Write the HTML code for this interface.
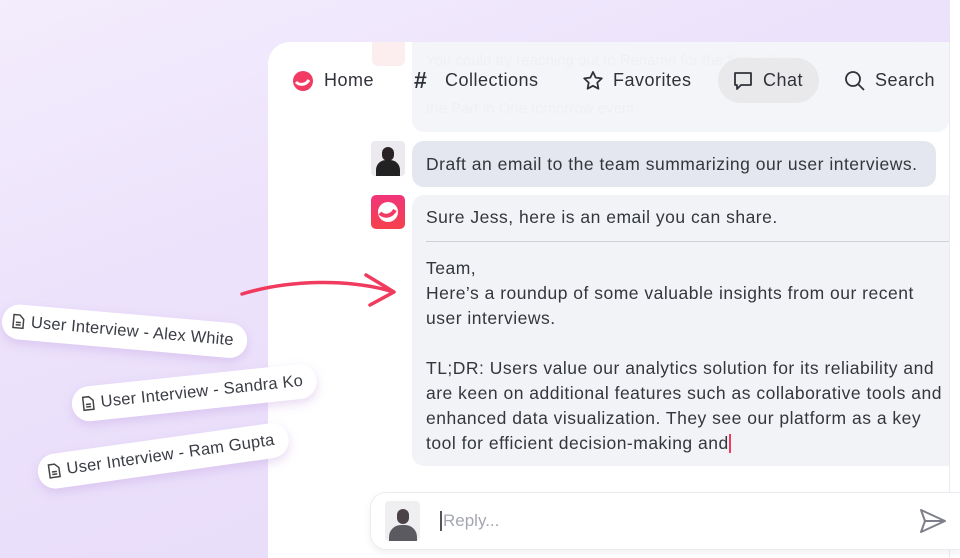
<!DOCTYPE html><html><head><style>
html,body{margin:0;width:960px;height:558px;overflow:hidden}
body{background:#fff;font-family:"Liberation Sans",sans-serif;position:relative}
.wrap{position:absolute;left:0;top:0;width:960px;height:558px;overflow:hidden}
.bg{position:absolute;left:0;top:-40px;width:950px;height:598px;border-radius:0 40px 0 0;background:linear-gradient(160deg,#f4eefc 0%,#ece2fb 40%,#e6dafa 100%)}
.card{position:absolute;left:268px;top:42px;width:681px;height:516px;background:#fff;border-radius:22px 0 0 0;border-right:1px solid #ebeaf3}
.t{position:absolute;color:#30323a;white-space:nowrap}
.nav{font-size:18px;top:70px;letter-spacing:.5px}
.b{position:absolute;border-radius:12px}
.msg{font-size:17.5px;letter-spacing:.5px;color:#33363d;line-height:25px}
.pill{position:absolute;background:#fff;border-radius:20px;box-shadow:0 4px 10px rgba(190,150,220,.35);font-size:16.5px;letter-spacing:.2px;color:#3b3d45;padding:8px 14px 8px 10px;white-space:nowrap;transform-origin:left center}
.pill svg{vertical-align:-3px;margin-right:6px}
</style></head><body><div class="wrap">
<div class="bg"></div>
<div class="card"></div>
<div class="b" style="left:412px;top:42px;width:537px;height:90px;background:#f4f5f8;border-radius:0 0 12px 12px"></div>
<div class="t" style="left:426px;top:52px;font-size:15px;color:#f0f0f3">You could try reaching out to Rename for the first sales</div>
<div class="t" style="left:426px;top:100px;font-size:15px;color:#f0f0f3">the Part in One tomorrow event</div>
<div style="position:absolute;left:372px;top:42px;width:33px;height:24px;background:#fcedef;border-radius:0 0 6px 6px"></div>
<svg style="position:absolute;left:292px;top:70px" width="22" height="22" viewBox="0 0 22 22"><circle cx="11" cy="11" r="10" fill="#f23a62"/><path d="M4 12c3 3 9 4 13-2" stroke="#fff" stroke-width="3" fill="none"/></svg>
<div class="t nav" style="left:324px">Home</div>
<div class="t nav" style="left:414px;font-size:23px;top:67px;font-weight:bold">#</div>
<div class="t nav" style="left:445px">Collections</div>
<svg style="position:absolute;left:581px;top:69px" width="24" height="24" viewBox="0 0 24 24"><path d="M12 3l2.7 5.6 6.1.8-4.5 4.2 1.1 6.1L12 16.8 6.6 19.7l1.1-6.1L3.2 9.4l6.1-.8z" fill="none" stroke="#30323a" stroke-width="1.8" stroke-linejoin="round"/></svg>
<div class="t nav" style="left:613px">Favorites</div>
<div style="position:absolute;left:718px;top:58px;width:101px;height:45px;border-radius:23px;background:#e9e9ec"></div>
<svg style="position:absolute;left:731px;top:69px" width="24" height="24" viewBox="0 0 24 24"><path d="M4 4h16v12H10l-4 4v-4H4z" fill="none" stroke="#30323a" stroke-width="1.8" stroke-linejoin="round"/></svg>
<div class="t nav" style="left:763px">Chat</div>
<svg style="position:absolute;left:843px;top:69px" width="24" height="24" viewBox="0 0 24 24"><circle cx="10" cy="10" r="7" fill="none" stroke="#30323a" stroke-width="1.8"/><path d="M15 15l6 6" stroke="#30323a" stroke-width="1.8"/></svg>
<div class="t nav" style="left:875px">Search</div>
<div style="position:absolute;left:371px;top:141px;width:34px;height:35px;background:#ece9ef;border-radius:4px;overflow:hidden"><div style="position:absolute;left:11px;top:6px;width:12px;height:14px;border-radius:6px;background:#2a2224"></div><div style="position:absolute;left:5px;top:19px;width:24px;height:20px;border-radius:10px 10px 0 0;background:#222"></div></div>
<div class="b" style="left:412px;top:141px;width:524px;height:46px;background:#e4e7ef"></div>
<div class="t msg" style="left:426px;top:152px">Draft an email to the team summarizing our user interviews.</div>
<svg style="position:absolute;left:371px;top:195px" width="34" height="34" viewBox="0 0 34 34"><defs><linearGradient id="g" x1="0" y1="0" x2="0" y2="1"><stop offset="0" stop-color="#f0357a"/><stop offset="1" stop-color="#f5414c"/></linearGradient></defs><rect width="34" height="34" rx="5" fill="url(#g)"/><circle cx="17" cy="17" r="10" fill="#fff"/><path d="M9 18c4 4 11 4 15-3" stroke="#f23a62" stroke-width="4" fill="none"/></svg>
<div class="b" style="left:412px;top:195px;width:537px;height:271px;background:#f2f3f6;border-radius:12px 0 0 12px"></div>
<div class="t msg" style="left:426px;top:205px">Sure Jess, here is an email you can share.</div>
<div style="position:absolute;left:426px;top:241px;width:523px;height:1px;background:#cfd1d8"></div>
<div class="t msg" style="left:426px;top:256px">Team,<br>Here’s a roundup of some valuable insights from our recent<br>user interviews.<br><br>TL;DR: Users value our analytics solution for its reliability and<br>are keen on additional features such as collaborative tools and<br>enhanced data visualization. They see our platform as a key<br>tool for efficient decision-making and<span style="display:inline-block;width:2px;height:19px;background:#f23a62;vertical-align:-4px"></span></div>
<svg style="position:absolute;left:238px;top:270px" width="160" height="50" viewBox="0 0 160 50"><path d="M4 24C50 10 110 8 156 22M128 5l28 17-24 13" fill="none" stroke="#f03a5e" stroke-width="3.5" stroke-linecap="round" stroke-linejoin="round"/></svg>
<div class="pill" style="left:2px;top:303px;transform:rotate(5deg)"><svg width="13" height="16" viewBox="0 0 13 16"><path d="M1.5 1.5h6l4 4v9h-10z M4 9h5M4 11.5h5" fill="none" stroke="#444" stroke-width="1.5"/></svg>User Interview - Alex White</div>
<div class="pill" style="left:72px;top:388px;transform:rotate(-6deg)"><svg width="13" height="16" viewBox="0 0 13 16"><path d="M1.5 1.5h6l4 4v9h-10z M4 9h5M4 11.5h5" fill="none" stroke="#444" stroke-width="1.5"/></svg>User Interview - Sandra Ko</div>
<div class="pill" style="left:38px;top:456px;transform:rotate(-8deg)"><svg width="13" height="16" viewBox="0 0 13 16"><path d="M1.5 1.5h6l4 4v9h-10z M4 9h5M4 11.5h5" fill="none" stroke="#444" stroke-width="1.5"/></svg>User Interview - Ram Gupta</div>
<div style="position:absolute;left:370px;top:492px;width:590px;height:56px;border:1px solid #ececf2;border-right:none;border-radius:16px 0 0 16px;background:#fff;box-shadow:0 3px 8px rgba(0,0,0,.06)"></div>
<div style="position:absolute;left:385px;top:501px;width:35px;height:40px;background:#efeef1;border-radius:4px;overflow:hidden"><div style="position:absolute;left:12px;top:8px;width:12px;height:15px;border-radius:6px;background:#4a4246"></div><div style="position:absolute;left:4px;top:24px;width:28px;height:20px;border-radius:12px 12px 0 0;background:#5a5a60"></div></div>
<div style="position:absolute;left:440px;top:511px;width:2px;height:20px;background:#555"></div>
<div class="t" style="left:443px;top:511px;font-size:17px;color:#a4a7b0">Reply...</div>
<svg style="position:absolute;left:919px;top:508px" width="28" height="26" viewBox="0 0 28 26"><path d="M2 2l24 11L2 24l4-11z M6 13h20" fill="none" stroke="#7d808a" stroke-width="2" stroke-linejoin="round"/></svg>
</div></body></html>
